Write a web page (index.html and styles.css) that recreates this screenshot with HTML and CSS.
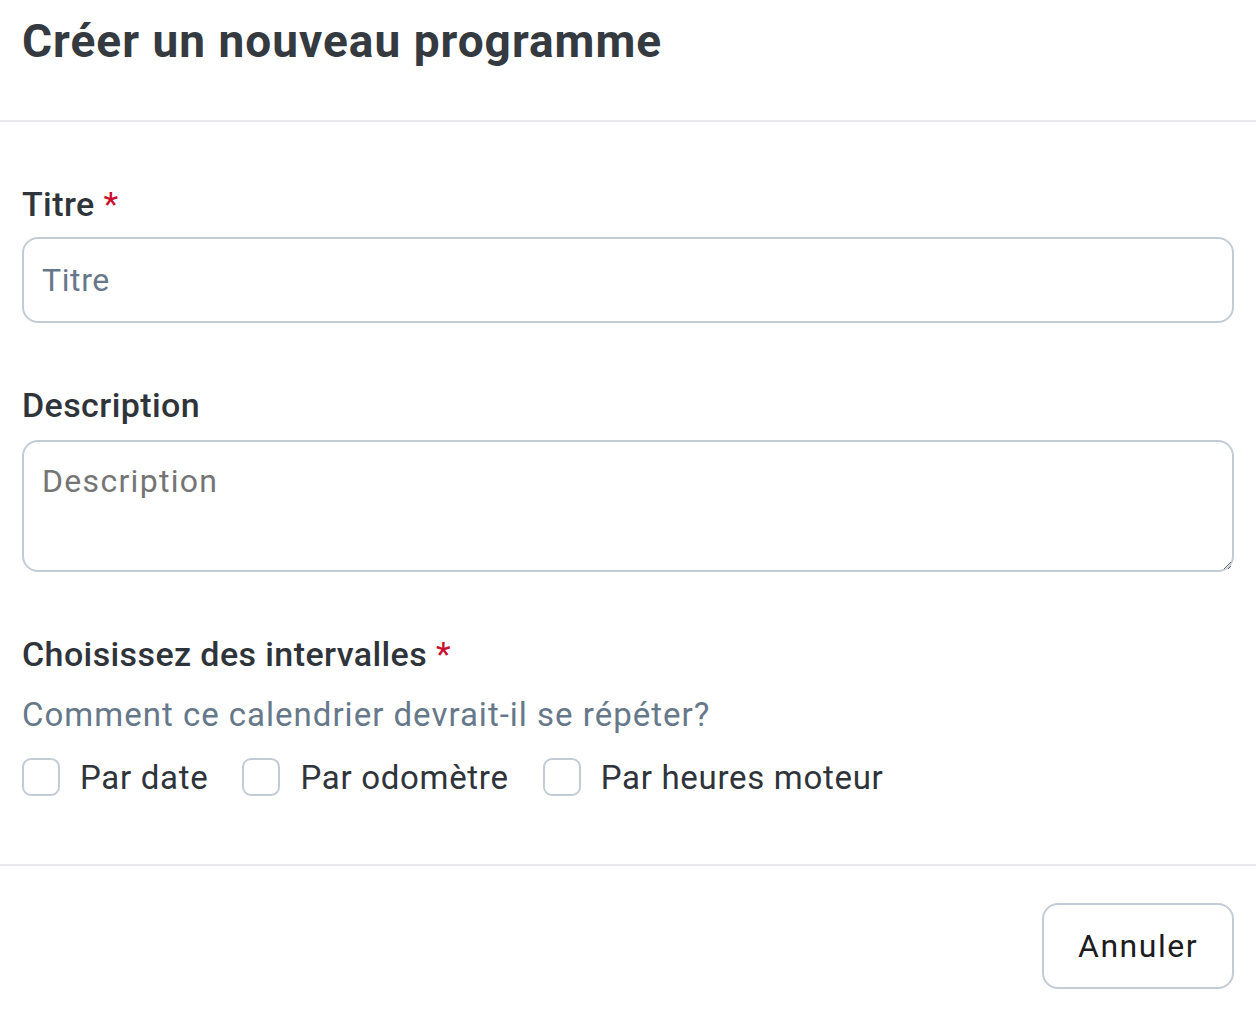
FILE: index.html
```html
<!DOCTYPE html>
<html lang="fr">
<head>
<meta charset="utf-8">
<title>Créer un nouveau programme</title>
<link rel="stylesheet" href="styles.css">
</head>
<body>
<div class="modal">
  <header class="modal-header">
    <h1 class="modal-title">Créer un nouveau programme</h1>
  </header>
  <section class="modal-body">
    <div class="field">
      <label class="label" for="titre">Titre <span class="req">*</span></label>
      <input class="input" id="titre" type="text" placeholder="Titre">
    </div>
    <div class="field">
      <label class="label" for="desc">Description</label>
      <textarea class="textarea" id="desc" placeholder="Description"></textarea>
    </div>
    <div class="field">
      <div class="label">Choisissez des intervalles <span class="req">*</span></div>
      <div class="hint">Comment ce calendrier devrait-il se répéter?</div>
      <div class="checks">
        <label class="check"><span class="box"></span><span class="check-text">Par date</span></label>
        <label class="check"><span class="box"></span><span class="check-text">Par odomètre</span></label>
        <label class="check"><span class="box"></span><span class="check-text">Par heures moteur</span></label>
      </div>
    </div>
  </section>
  <footer class="modal-footer">
    <button class="btn" type="button">Annuler</button>
  </footer>
</div>
</body>
</html>
```
FILE: styles.css
```css
* { box-sizing: border-box; }
html, body { margin: 0; padding: 0; background: #fff; }
body {
  font-family: Roboto, "Liberation Sans", sans-serif;
  color: #2f343b;
  width: 1256px;
  height: 1010px;
  overflow: hidden;
}
.modal-header {
  height: 122px;
  padding: 15px 22px 0;
  border-bottom: 2px solid #e8e9ed;
}
.modal-title {
  margin: 0;
  font-size: 46px;
  line-height: 52.8px;
  font-weight: 700;
  color: #343a40;
  letter-spacing: 1px;
}
.modal-body {
  padding: 0 22px;
}
.field { margin-top: 62px; display: flex; flex-direction: column; }
.label {
  font-size: 34px;
  line-height: 40px;
  font-weight: 500;
  color: #2f343b;
  margin-bottom: 13px;
  letter-spacing: 0.4px;
}
.req { color: #c8102e; font-weight: 400; }
.input, .textarea {
  width: 100%;
  border: 2px solid #c3ccd6;
  border-radius: 16px;
  font-family: Roboto, "Liberation Sans", sans-serif;
  font-size: 32px;
  color: #2f343b;
  background: #fff;
  outline: none;
}
.input {
  height: 86px;
  padding: 0 18px;
  letter-spacing: 0.6px;
}
.input::placeholder { color: #66788a; }
.textarea {
  height: 132px;
  margin-top: 2px;
  padding: 15px 18px;
  line-height: 48px;
  resize: vertical;
  letter-spacing: 1.3px;
}
.textarea::placeholder { color: #757575; }
.hint {
  font-size: 33px;
  line-height: 40px;
  color: #66788a;
  margin-top: 8px;
  letter-spacing: 1px;
}
.checks {
  display: flex;
  gap: 34px;
  margin-top: 23px;
  height: 38px;
}
.check {
  display: flex;
  align-items: center;
  gap: 20px;
  font-size: 33px;
  color: #2f343b;
  letter-spacing: 0.7px;
}
.box {
  width: 38px;
  height: 38px;
  border: 2px solid #c3ccd6;
  border-radius: 9px;
  background: #fff;
  flex: none;
}
.check-text { line-height: 40px; position: relative; top: 1px; }
.modal-footer {
  margin-top: 68px;
  border-top: 2px solid #e8e9ed;
  padding: 37px 22px 0;
  display: flex;
  justify-content: flex-end;
}
.btn {
  width: 192px;
  height: 86px;
  border: 2px solid #c3ccd6;
  border-radius: 16px;
  background: #fff;
  font-family: Roboto, "Liberation Sans", sans-serif;
  font-size: 32px;
  color: #1c1c1e;
  letter-spacing: 1.5px;
}
```
